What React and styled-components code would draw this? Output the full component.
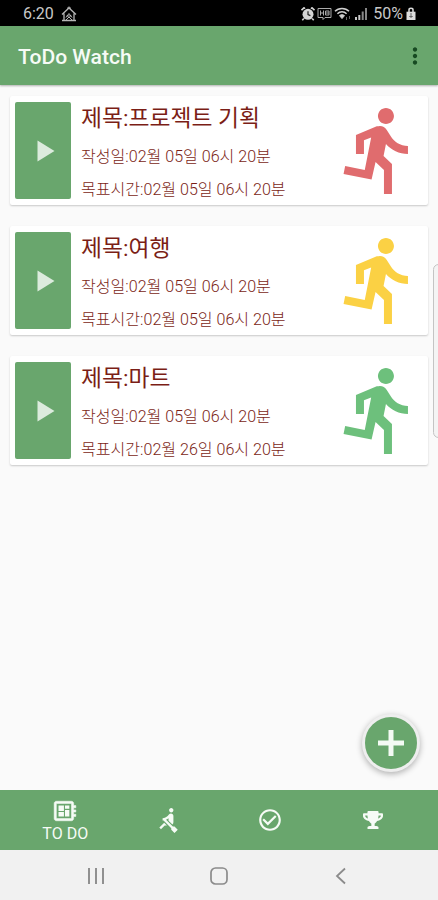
import React from "react";
import styled, { createGlobalStyle } from "styled-components";
import { MdRowing, MdCheckCircleOutline, MdMoreVert } from "react-icons/md";
import { FaTrophy } from "react-icons/fa";

const todo_list = [
  {
    id: 1,
    title: "프로젝트 기획",
    created: "02월 05일 06시 20분",
    target: "02월 05일 06시 20분",
    color: "#e06c6e",
  },
  {
    id: 2,
    title: "여행",
    created: "02월 05일 06시 20분",
    target: "02월 05일 06시 20분",
    color: "#fbd144",
  },
  {
    id: 3,
    title: "마트",
    created: "02월 05일 06시 20분",
    target: "02월 26일 06시 20분",
    color: "#6dc07c",
  },
];

const StatusBar = () => {
  return (
    <StatusWrap>
      <StatusLeft>
        <span>6:20</span>
        <svg width="16" height="16" viewBox="0 0 16 16" fill="none" stroke="#b5b5b5">
          <path d="M1 8.5 8 2l7 6.5M3 7.5V15M13 7.5V15M1 14.5h14" strokeWidth="1.3" />
          <path d="M6 2.5 8 .8l2 1.7M5 11.5l3-4 3 4M5.5 10h5M5 14l3-3 3 3" />
        </svg>
      </StatusLeft>
      <StatusRight>
        <svg width="14" height="14" viewBox="0 0 14 14">
          <path
            d="M.5 3.2 3 .8l1 1M13.5 3.2 11 .8l-1 1M2.8 11.5l-1.5 1.7M11.2 11.5l1.5 1.7"
            stroke="#d6d6d6"
            strokeWidth="1.6"
            fill="none"
          />
          <circle cx="7" cy="7.3" r="5.5" fill="#d6d6d6" />
          <path d="M7 4.2v3.4l2.4 1" stroke="#222" strokeWidth="1.2" fill="none" />
        </svg>
        <svg width="15" height="14" viewBox="0 0 15 14" fill="none" stroke="#aaa">
          <path d="M1 1.5h13v9H8l-2 2v-2H1z" />
          <path d="M3.5 3.5v5M6.5 3.5v5M3.5 6h3M8.5 4h3.5v4H8.5zM8.5 6H12" />
        </svg>
        <svg width="18" height="14" viewBox="0 0 18 14" fill="none" stroke="#d0d0d0">
          <path d="M1 4.3C4.6.4 11.4.4 15 4.3" strokeWidth="1.5" />
          <path d="M3.4 6.8c2.6-2.7 6.6-2.7 9.2 0" strokeWidth="1.5" />
          <path d="m5.5 8.6 2.5 3 2.5-3c-1.4-1.2-3.6-1.2-5 0z" fill="#d0d0d0" />
          <path d="M12.5 10v3M15.5 9v3" stroke="#666" />
        </svg>
        <svg width="14" height="14" viewBox="0 0 14 14">
          <path d="M1 10h2v3H1zM4.3 8h2v5h-2z" fill="#c8c8c8" />
          <path d="M7.7 4.5h2V13h-2z" fill="#898989" />
          <path d="M11.2 1h1.6v12h-1.6z" fill="#a8a8a8" />
        </svg>
        <Percent>50%</Percent>
        <svg width="10" height="14" viewBox="0 0 10 14">
          <path d="M3 5V2.8C3 .8 7 .8 7 2.8V5" fill="none" stroke="#ddd" strokeWidth="1.5" />
          <path d="M.5 4.7h9V13h-9z" fill="#ddd" />
          <path d="M5 6v5M3.3 9.5h3.4" stroke="#666" />
        </svg>
      </StatusRight>
    </StatusWrap>
  );
};

const TodoItem = ({ title, created, target, color }) => {
  return (
    <Card>
      <PlayButton>
        <svg width="18" height="22" viewBox="0 0 18 22">
          <path d="M.5.5v21L17.5 11z" fill="#dcebdd" />
        </svg>
      </PlayButton>
      <Info>
        <TodoTitle>제목:{title}</TodoTitle>
        <TodoDate>작성일:{created}</TodoDate>
        <TodoDate>목표시간:{target}</TodoDate>
      </Info>
      <Runner viewBox="0 0 24 24" $color={color}>
        <path d="M13.49 5.48c1.1 0 2-.9 2-2s-.9-2-2-2-2 .9-2 2 .9 2 2 2zm-3.6 13.9l1-4.4 2.1 2v6h2v-7.5l-2.1-2 .6-3c1.3 1.5 3.3 2.5 5.5 2.5v-2c-1.9 0-3.5-1-4.3-2.4l-1-1.6c-.4-.6-1-1-1.7-1-.3 0-.5.1-.8.1l-5.2 2.2v4.7h2v-3.4l1.8-.7-1.6 8.1-4.9-1-.4 2 7 1.4z" />
      </Runner>
    </Card>
  );
};

const App = () => {
  return (
    <Container>
      <GlobalStyle />
      <StatusBar />
      <Header>
        <h1>ToDo Watch</h1>
        <MdMoreVert size={26} color="#174a22" />
      </Header>
      <Content>
        {todo_list.map((t) => (
          <TodoItem key={t.id} {...t} />
        ))}
        <EdgeHandle />
        <AddButton>
          <svg width="26" height="26" viewBox="0 0 26 26">
            <path d="M13 0v26M0 13h26" stroke="#f4faf4" strokeWidth="5" />
          </svg>
        </AddButton>
      </Content>
      <TabBar>
        <Tab>
          <svg width="26" height="26" viewBox="0 0 24 24" fill="currentColor">
            <path
              d="M22 9V7h-2V5c0-1.1-.9-2-2-2H4c-1.1 0-2 .9-2 2v14c0 1.1.9 2 2 2h14c1.1 0 2-.9 2-2v-2h2v-2h-2v-2h2v-2h-2V9h2zm-4 10H4V5h14v14z"
              stroke="currentColor"
              strokeWidth="0.5"
            />
            <path d="M6 13h5v4H6zm6-6h4v3h-4zM6 7h5v5H6zm6 4h4v6h-4z" />
          </svg>
          <TabLabel>TO DO</TabLabel>
        </Tab>
        <Tab>
          <MdRowing size={26} />
        </Tab>
        <Tab>
          <MdCheckCircleOutline size={26} />
        </Tab>
        <Tab>
          <FaTrophy size={20} />
        </Tab>
      </TabBar>
      <SystemNav>
        <svg width="18" height="18" viewBox="0 0 18 18">
          <path d="M2 1v16M9 1v16M16 1v16" stroke="#8b8b8b" strokeWidth="1.9" />
        </svg>
        <svg width="18" height="18" viewBox="0 0 18 18">
          <rect x="1" y="1" width="16" height="16" rx="4.5" fill="none" stroke="#8b8b8b" strokeWidth="1.7" />
        </svg>
        <svg width="18" height="18" viewBox="0 0 18 18">
          <path d="M13 1.5 5 9l8 7.5" fill="none" stroke="#8b8b8b" strokeWidth="1.8" />
        </svg>
      </SystemNav>
    </Container>
  );
};

export default App;

const GlobalStyle = createGlobalStyle`
  * {
    box-sizing: border-box;
  }
  body {
    margin: 0;
    font-family: Roboto, "Noto Sans CJK KR", sans-serif;
  }
  svg {
    display: block;
    flex-shrink: 0;
  }
`;

const Container = styled.div`
  display: flex;
  flex-direction: column;
  width: 438px;
  height: 900px;
  overflow: hidden;
  background-color: #fafafa;
`;

const StatusWrap = styled.div`
  display: flex;
  justify-content: space-between;
  align-items: center;
  height: 26px;
  padding: 2px 22px 0 23px;
  background-color: #000000;
  color: #c8c8c8;
  font-size: 16px;
  line-height: 24px;
`;

const StatusLeft = styled.div`
  display: flex;
  align-items: center;
  gap: 7px;
`;

const StatusRight = styled.div`
  display: flex;
  align-items: center;
  gap: 2px;
`;

const Percent = styled.span`
  margin: 0 1px 0 3px;
  font-size: 16px;
`;

const Header = styled.header`
  display: flex;
  justify-content: space-between;
  align-items: center;
  height: 59px;
  padding: 1px 10px 0 18px;
  background-color: #69a66d;
  box-shadow: 0 1px 2px rgba(0, 0, 0, 0.3);
  z-index: 1;
  h1 {
    margin: 0;
    padding-top: 1px;
    font-weight: 500;
    font-size: 21.1px;
    line-height: 28px;
    color: #f6fbf6;
  }
`;

const Content = styled.main`
  position: relative;
  display: flex;
  flex-direction: column;
  gap: 21px;
  flex: 1;
  padding: 11px 10px 0;
`;

const Card = styled.div`
  display: flex;
  height: 109px;
  padding: 6px 0 0 5px;
  border-radius: 2px;
  background-color: #ffffff;
  box-shadow: 0 1px 2px rgba(0, 0, 0, 0.2);
`;

const PlayButton = styled.button`
  display: flex;
  align-items: center;
  justify-content: center;
  width: 56px;
  height: 97px;
  padding: 0 0 0 6px;
  border: 0;
  border-radius: 2px;
  background-color: #69a66d;
`;

const Info = styled.div`
  flex: 1;
  padding: 0 0 0 10px;
  white-space: nowrap;
`;

const TodoTitle = styled.p`
  margin: 0 0 6px;
  font-size: 22.8px;
  line-height: 33px;
  color: #7b1e16;
`;

const TodoDate = styled.p`
  margin: 0 0 1px;
  font-weight: 300;
  font-size: 16.07px;
  line-height: 32px;
  color: #7b1e16;
`;

const Runner = styled.svg`
  width: 96px;
  height: 96px;
  margin: 0 0.5px 0 auto;
  fill: ${(props) => props.$color};
`;

// samsung edge panel handle on the right side
const EdgeHandle = styled.div`
  position: absolute;
  top: 179px;
  right: -6px;
  width: 11px;
  height: 174px;
  border: 1px solid #c4c4c4;
  border-radius: 6px;
  background-color: #f4f4f4;
`;

const AddButton = styled.button`
  position: absolute;
  right: 18px;
  bottom: 18px;
  display: flex;
  align-items: center;
  justify-content: center;
  width: 58px;
  height: 58px;
  padding: 0;
  border: 3px solid #eeeeee;
  border-radius: 50%;
  background-color: #69a66d;
  box-shadow: 0 2px 6px rgba(0, 0, 0, 0.3);
`;

const TabBar = styled.nav`
  display: flex;
  height: 60px;
  padding: 0 14px;
  background-color: #69a66d;
  color: #f6fbf6;
`;

const Tab = styled.div`
  flex: 1;
  display: flex;
  flex-direction: column;
  align-items: center;
  justify-content: center;
`;

const TabLabel = styled.span`
  padding-top: 1px;
  font-size: 16px;
  line-height: 18px;
`;

const SystemNav = styled.div`
  display: flex;
  justify-content: space-between;
  align-items: center;
  height: 50px;
  padding: 2px 88px 0 87px;
  background-color: #f1f1f1;
`;
